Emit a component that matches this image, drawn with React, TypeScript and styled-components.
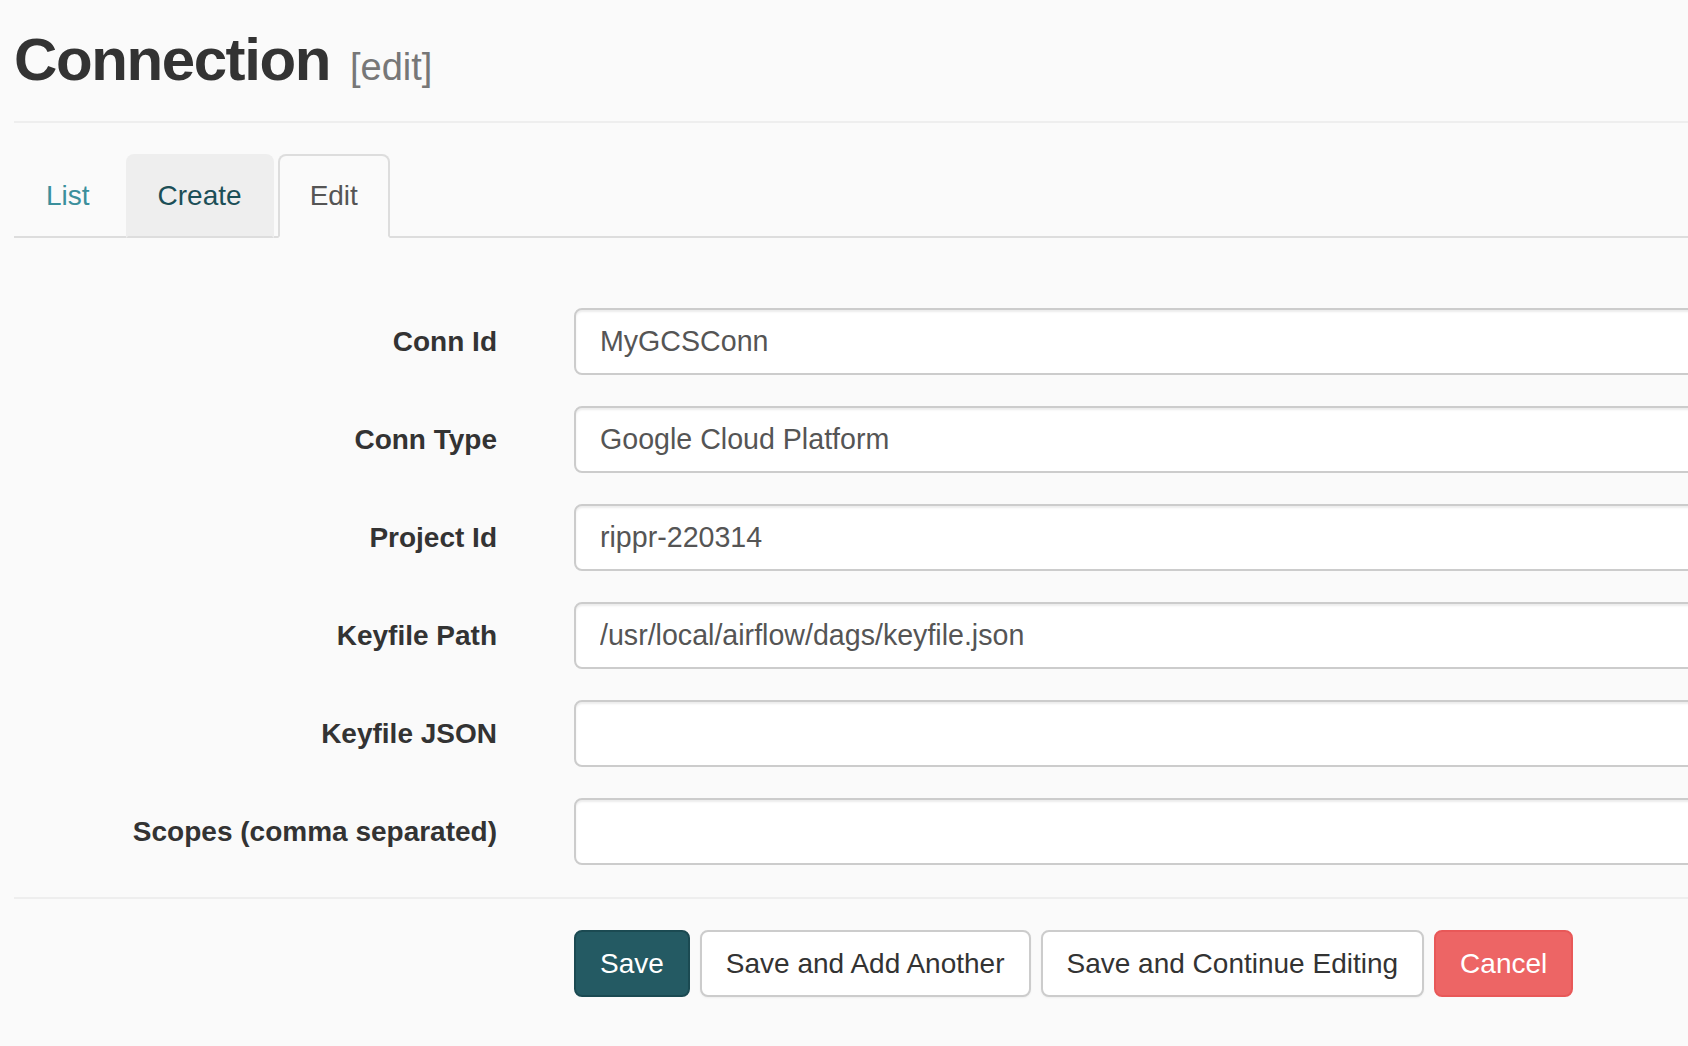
import React from "react";
import styled, { createGlobalStyle, css } from "styled-components";

const GlobalStyle = createGlobalStyle`
  html, body {
    margin: 0;
    padding: 0;
    background: #fafafa;
    overflow: hidden;
  }
  body {
    font-family: "Liberation Sans", Arial, Helvetica, sans-serif;
    color: #333;
  }
  * { box-sizing: border-box; }
`;

const Page = styled.div`
  width: 100%;
  min-height: 1046px;
  padding: 0 0 0 14px;
  overflow: hidden;
`;

const Title = styled.h1`
  margin: 27px 0 0;
  font-size: 60px;
  line-height: 66px;
  font-weight: 700;
  letter-spacing: -1.4px;
  color: #333;
  white-space: nowrap;
`;

const Small = styled.small`
  margin-left: 20px;
  font-size: 38px;
  font-weight: 400;
  letter-spacing: 0;
  color: #777;
`;

const Rule = styled.hr<{ $top: number }>`
  margin: ${(p) => p.$top}px 0 0;
  border: 0;
  border-top: 2px solid #eee;
  height: 0;
`;

const TabBar = styled.ul`
  display: flex;
  margin: 31px 0 0;
  padding: 0;
  list-style: none;
  border-bottom: 2px solid #ddd;
`;

type TabKind = "link" | "hover" | "active";

const Tab = styled.li<{ $kind: TabKind }>`
  margin: 0 4px -2px 0;
  padding: 20px 30px;
  font-size: 28px;
  line-height: 40px;
  border: 2px solid transparent;
  border-radius: 8px 8px 0 0;
  cursor: pointer;
  ${(p) =>
    p.$kind === "link" &&
    css`
      color: #3b8f9c;
    `}
  ${(p) =>
    p.$kind === "hover" &&
    css`
      color: #1c4f57;
      background: #eee;
      border-color: #eee #eee #ddd;
    `}
  ${(p) =>
    p.$kind === "active" &&
    css`
      color: #555;
      background: #fafafa;
      border-color: #ddd #ddd transparent;
    `}
`;

const Form = styled.form`
  display: grid;
  grid-template-columns: 483px 1fr;
  column-gap: 77px;
  row-gap: 31px;
  align-items: center;
  margin-top: 70px;
`;

const Label = styled.label`
  justify-self: end;
  font-size: 28px;
  font-weight: 700;
  color: #333;
  white-space: nowrap;
`;

const Input = styled.input`
  display: block;
  width: calc(100% + 40px);
  height: 67px;
  padding: 0 24px;
  font-family: "Liberation Sans", Arial, Helvetica, sans-serif;
  font-size: 28.6px;
  color: #555;
  background: #fff;
  border: 2px solid #ccc;
  border-radius: 8px;
  box-shadow: inset 0 2px 2px rgba(0, 0, 0, 0.075);
  outline: none;
`;

const Actions = styled.div`
  display: grid;
  grid-template-columns: 483px 1fr;
  column-gap: 77px;
  margin-top: 31px;
`;

const ButtonRow = styled.div`
  grid-column: 2;
  display: flex;
  gap: 10px;
`;

type BtnKind = "primary" | "default" | "danger";

const Button = styled.button<{ $kind: BtnKind }>`
  height: 67px;
  padding: 0 24px;
  font-family: "Liberation Sans", Arial, Helvetica, sans-serif;
  font-size: 28px;
  border-radius: 8px;
  border: 2px solid;
  cursor: pointer;
  white-space: nowrap;
  ${(p) =>
    p.$kind === "primary" &&
    css`
      color: #fff;
      background: #245a63;
      border-color: #1b4a52;
    `}
  ${(p) =>
    p.$kind === "default" &&
    css`
      color: #333;
      background: #fff;
      border-color: #ccc;
      box-shadow: 0 1px 2px rgba(0, 0, 0, 0.05);
    `}
  ${(p) =>
    p.$kind === "danger" &&
    css`
      color: #fff;
      background: #ed6565;
      border-color: #e85858;
    `}
`;

const fields: { label: string; value: string }[] = [
  { label: "Conn Id", value: "MyGCSConn" },
  { label: "Conn Type", value: "Google Cloud Platform" },
  { label: "Project Id", value: "rippr-220314" },
  { label: "Keyfile Path", value: "/usr/local/airflow/dags/keyfile.json" },
  { label: "Keyfile JSON", value: "" },
  { label: "Scopes (comma separated)", value: "" },
];

export default function App() {
  return (
    <Page>
      <GlobalStyle />
      <Title>
        Connection<Small>[edit]</Small>
      </Title>
      <Rule $top={21} />
      <TabBar>
        <Tab $kind="link">List</Tab>
        <Tab $kind="hover">Create</Tab>
        <Tab $kind="active">Edit</Tab>
      </TabBar>
      <Form onSubmit={(e) => e.preventDefault()}>
        {fields.map((f) => (
          <React.Fragment key={f.label}>
            <Label>{f.label}</Label>
            <Input defaultValue={f.value} />
          </React.Fragment>
        ))}
      </Form>
      <Rule $top={32} />
      <Actions>
        <ButtonRow>
          <Button $kind="primary">Save</Button>
          <Button $kind="default">Save and Add Another</Button>
          <Button $kind="default">Save and Continue Editing</Button>
          <Button $kind="danger">Cancel</Button>
        </ButtonRow>
      </Actions>
    </Page>
  );
}
